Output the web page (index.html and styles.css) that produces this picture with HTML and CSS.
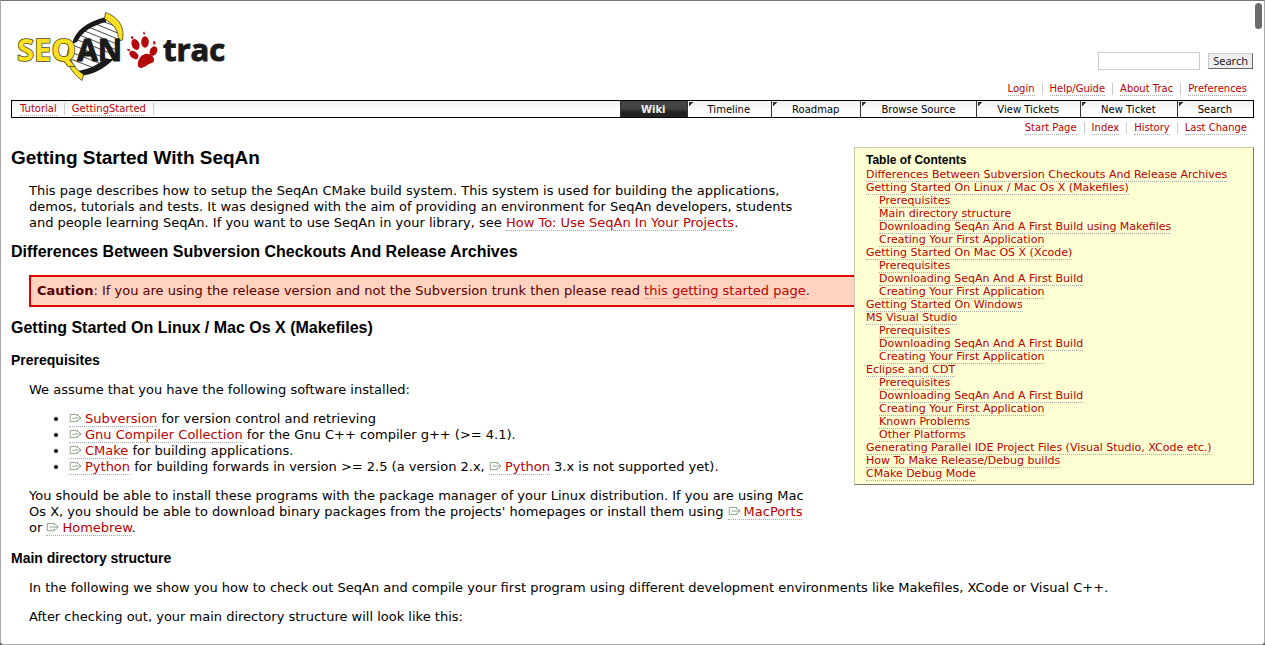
FILE: index.html
```html
<!DOCTYPE html>
<html lang="en">
<head>
<meta charset="utf-8">
<title>Getting Started With SeqAn</title>
<link rel="stylesheet" href="styles.css">
</head>
<body>
<svg class="defs" width="0" height="0" aria-hidden="true">
  <symbol id="ext" viewBox="0 0 16 10">
    <path d="M8.500 2.500V.500H.500v8h8v-2M3 4.500h9.500M9.500 1.500l3 3-3 3" fill="none" stroke="#809a7c"/>
  </symbol>
</svg>
<div class="window">
  <header class="banner">
    <a class="logo" href="#" aria-label="SeqAn trac">
      <svg width="216" height="74" viewBox="14 10 216 74">
        <defs>
          <clipPath id="helix"><path d="M106 19C87 23 76 31 73 44C70 56 70 63 82 74C99 70 111 60 117 50C121 39 121 28 106 19Z"/></clipPath>
        </defs>
        <path d="M106 19C87 23 76 31 73 44C70 56 70 63 82 74C99 70 111 60 117 50C121 39 121 28 106 19Z" fill="#fff"/>
        <path clip-path="url(#helix)" d="M97 19l28 11M91 22l34 14M86 26l39 16M82 30l40 16M77 34l40 16M73 38l44 18M70 44l45 18M68 51l41 16M68 58l34 13" stroke="#333" stroke-width=".9" fill="none"/>
        <path d="M106 17C86 22 75 31 72 44L77 42C82 32 91 26 106 22Z" fill="#1a1a1a"/>
        <path d="M78 71C90 69 99 64 104 59H114C104 69 94 74 81 76Z" fill="#1a1a1a"/>
        <path d="M105.500 12.500C118 17 125 26 122.500 40L118.500 41C119 31 114 24 104.500 19Z" fill="#fbe122" stroke="#45400f" stroke-width=".8"/>
        <path d="M72 43C64 52 65 68 82 80.500L83.500 74.500C74 68 69 61 71 52Z" fill="#fbe122" stroke="#45400f" stroke-width=".8"/>
        <text class="seq" x="17" y="61">SEQ</text>
        <text class="an" x="77" y="61">AN</text>
        <g fill="#b40a0a">
          <ellipse cx="135.500" cy="44.500" rx="3.800" ry="5.600" transform="rotate(-22 135.500 44.500)"/>
          <ellipse cx="145" cy="42" rx="3.800" ry="5.800"/>
          <ellipse cx="153.500" cy="51" rx="3.600" ry="5" transform="rotate(25 153.500 51)"/>
          <ellipse cx="134" cy="55" rx="3.400" ry="5.200" transform="rotate(-50 134 55)"/>
          <path d="M138 66C137 62 140 55 145 54C150 53 155 57 154 61C152 64 149 63 146 66C143 68 139 69 138 66Z"/>
          <path d="M132.500 39.500l-1.800-2 1.300-1.700 1.700 2zM143.600 34.500l-.5-2.400 1.200-.6.900 2.800zM153.800 45l-.8-3 1.500-1.500 1.200 3zM129.500 51.500l-2.500-1.500.8-1.500 2.500 1.500z"/>
        </g>
        <text class="trac" x="163" y="61">trac</text>
      </svg>
    </a>
    <form class="search">
      <input type="text" aria-label="Search text">
      <button type="button">Search</button>
    </form>
  </header>

  <nav class="links metanav" aria-label="Account">
    <a href="#">Login</a><a href="#">Help/Guide</a><a href="#">About Trac</a><a href="#">Preferences</a>
  </nav>

  <div class="mainbar">
    <nav class="links path" aria-label="Breadcrumb"><a href="#">Tutorial</a><a href="#">GettingStarted</a></nav>
    <nav class="tabs" aria-label="Main">
      <a class="active" href="#">Wiki</a><a href="#">Timeline</a><a href="#">Roadmap</a><a href="#">Browse Source</a><a href="#">View Tickets</a><a href="#">New Ticket</a><a href="#">Search</a>
    </nav>
  </div>

  <nav class="links ctxtnav" aria-label="Page">
    <a href="#">Start Page</a><a href="#">Index</a><a href="#">History</a><a href="#">Last Change</a>
  </nav>

  <main class="wiki">
    <aside class="toc">
      <h4>Table of Contents</h4>
      <ol>
        <li><a href="#">Differences Between Subversion Checkouts And Release Archives</a></li>
        <li><a href="#">Getting Started On Linux / Mac Os X (Makefiles)</a>
          <ol>
            <li><a href="#">Prerequisites</a></li>
            <li><a href="#">Main directory structure</a></li>
            <li><a href="#">Downloading SeqAn And A First Build using Makefiles</a></li>
            <li><a href="#">Creating Your First Application</a></li>
          </ol></li>
        <li><a href="#">Getting Started On Mac OS X (Xcode)</a>
          <ol>
            <li><a href="#">Prerequisites</a></li>
            <li><a href="#">Downloading SeqAn And A First Build</a></li>
            <li><a href="#">Creating Your First Application</a></li>
          </ol></li>
        <li><a href="#">Getting Started On Windows</a></li>
        <li><a href="#">MS Visual Studio</a>
          <ol>
            <li><a href="#">Prerequisites</a></li>
            <li><a href="#">Downloading SeqAn And A First Build</a></li>
            <li><a href="#">Creating Your First Application</a></li>
          </ol></li>
        <li><a href="#">Eclipse and CDT</a>
          <ol>
            <li><a href="#">Prerequisites</a></li>
            <li><a href="#">Downloading SeqAn And A First Build</a></li>
            <li><a href="#">Creating Your First Application</a></li>
            <li><a href="#">Known Problems</a></li>
            <li><a href="#">Other Platforms</a></li>
          </ol></li>
        <li><a href="#">Generating Parallel IDE Project Files (Visual Studio, XCode etc.)</a></li>
        <li><a href="#">How To Make Release/Debug builds</a></li>
        <li><a href="#">CMake Debug Mode</a></li>
      </ol>
    </aside>

    <h1>Getting Started With SeqAn</h1>
    <p>This page describes how to setup the SeqAn CMake build system. This system is used for building the applications, demos, tutorials and tests. It was designed with the aim of providing an environment for SeqAn developers, students and people learning SeqAn. If you want to use SeqAn in your library, see <a href="#">How To: Use SeqAn In Your Projects</a>.</p>
    <h2>Differences Between Subversion Checkouts And Release Archives</h2>
    <div class="caution"><strong>Caution</strong>: If you are using the release version and not the Subversion trunk then please read <a href="#">this getting started page</a>.</div>
    <h2>Getting Started On Linux / Mac Os X (Makefiles)</h2>
    <h3>Prerequisites</h3>
    <p>We assume that you have the following software installed:</p>
    <ul>
      <li><a href="#"><svg class="ext"><use href="#ext"/></svg>Subversion</a> for version control and retrieving</li>
      <li><a href="#"><svg class="ext"><use href="#ext"/></svg>Gnu Compiler Collection</a> for the Gnu C++ compiler g++ (&gt;= 4.1).</li>
      <li><a href="#"><svg class="ext"><use href="#ext"/></svg>CMake</a> for building applications.</li>
      <li><a href="#"><svg class="ext"><use href="#ext"/></svg>Python</a> for building forwards in version &gt;= 2.5 (a version 2.x, <a href="#"><svg class="ext"><use href="#ext"/></svg>Python</a> 3.x is not supported yet).</li>
    </ul>
    <p>You should be able to install these programs with the package manager of your Linux distribution. If you are using Mac Os X, you should be able to download binary packages from the projects' homepages or install them using <a href="#"><svg class="ext"><use href="#ext"/></svg>MacPorts</a> or <a href="#"><svg class="ext"><use href="#ext"/></svg>Homebrew</a>.</p>
    <h3>Main directory structure</h3>
    <p>In the following we show you how to check out SeqAn and compile your first program using different development environments like Makefiles, XCode or Visual C++.</p>
    <p>After checking out, your main directory structure will look like this:</p>
  </main>
  <div class="thumb"></div>
</div>
</body>
</html>
```

FILE: styles.css
```css
* { box-sizing: border-box; }
html { background: #555; }
body {
  margin: 0;
  font: 13px/16px "DejaVu Sans", Verdana, sans-serif;
  color: #000;
}
.defs { position: absolute; }
.window {
  position: relative;
  min-height: 100vh;
  padding: 9px 10px 0;
  background: #fff;
  border: 1px solid #aaa;
  border-top-color: #777;
  border-radius: 0 0 4px 4px;
}
a {
  color: #b00;
  text-decoration: none;
  border-bottom: 1px dotted #aaa;
}

.banner {
  display: flex;
  justify-content: space-between;
  align-items: flex-end;
}
.logo { border: 0; padding-left: 3px; }
.logo svg { display: block; }
.seq { font: bold 31px "Noto Sans", sans-serif; fill: #fbe122; stroke: #45400f; stroke-width: 1.5px; paint-order: stroke; }
.an { font: bold 30px "Noto Sans", sans-serif; fill: #1a1a1a; stroke: #1a1a1a; stroke-width: 1px; }
.trac { font: bold 31px "Open Sans", sans-serif; fill: #1a1a1a; stroke: #1a1a1a; stroke-width: 1px; }
.search {
  display: flex;
  align-items: center;
  gap: 8px;
  margin: 0;
  padding: 0 1px 14px 0;
}
.search input {
  width: 102px;
  height: 18px;
  border: 1px solid #ccc;
  background: #fff;
}
.search button {
  height: 16px;
  padding: 0 4px 1px;
  font: 11px/13px "Noto Sans", sans-serif;
  color: #222;
  background: #eee;
  border: 1px solid #ccc;
  border-right-color: #666;
  border-bottom-color: #666;
}

.links {
  display: flex;
  justify-content: flex-end;
  font-size: 10px;
  line-height: 12px;
}
.links a { position: relative; margin: 0 7px; }
.links a + a { margin-left: 8px; }
.links a + a::before,
.path a:last-child::after {
  content: "";
  position: absolute;
  top: 0;
  left: -8px;
  width: 1px;
  height: 12px;
  background: #ccc;
}
.path a:last-child::after { left: auto; right: -8px; }
.metanav { margin-top: -1px; padding-bottom: 4px; }
.mainbar {
  display: flex;
  justify-content: space-between;
  height: 18px;
  border: 1px solid #000;
  background: linear-gradient(#eee, #fff 60%);
}
.path { padding: 2px 0 1px 1px; }
.tabs { display: flex; font-size: 10px; line-height: 17px; }
.tabs a {
  height: 16px;
  padding: 0 21px 0 20px;
  color: #000;
  border: 0;
  border-left: 1px solid #333;
  background: linear-gradient(135deg, #333 3px, transparent 3px) no-repeat 1px 1px;
}
.tabs .active {
  font-weight: bold;
  color: #eee;
  background: linear-gradient(#444 45%, #222 70%);
}
.ctxtnav { padding-top: 4px; }

.wiki { padding-top: 12px; }
.wiki h1, .wiki h2, .wiki h3, .toc h4 {
  font-family: "Liberation Sans", Arial, sans-serif;
  font-weight: bold;
}
.wiki h1 { margin: 0 0 14px; font-size: 19px; line-height: 22px; }
.wiki h2 { margin: 13px 0 15px; font-size: 16px; line-height: 16px; }
.wiki h3 { margin: 13px 0; font-size: 14px; line-height: 18px; }
.wiki p { margin: 13px 18px; }
.wiki ul { margin: 13px 18px; padding-left: 40px; }
.ext { width: 16px; height: 9px; }
.caution {
  margin: 13px 18px;
  padding: 6px;
  color: #500;
  background: #ffd3bf;
  border: 2px solid #d00;
}
.toc {
  position: relative;
  float: right;
  min-width: 400px;
  margin: 0 0 30px 40px;
  padding: 5px 11px 4px;
  font-size: 11px;
  line-height: 13px;
  white-space: nowrap;
  background: #ffffd4;
  border: 1px solid #cccbb0;
  border-right-color: #77776a;
  border-bottom-color: #77776a;
}
.toc h4 { margin: 0 0 1px; font-size: 12px; line-height: 14px; }
.toc ol { margin: 0; padding: 0; list-style: none; }
.toc ol ol { padding-left: 13px; }
.thumb {
  position: absolute;
  top: 2px;
  right: 2px;
  width: 7px;
  height: 26px;
  border-radius: 4px;
  background: #6b6b6b;
}
```
